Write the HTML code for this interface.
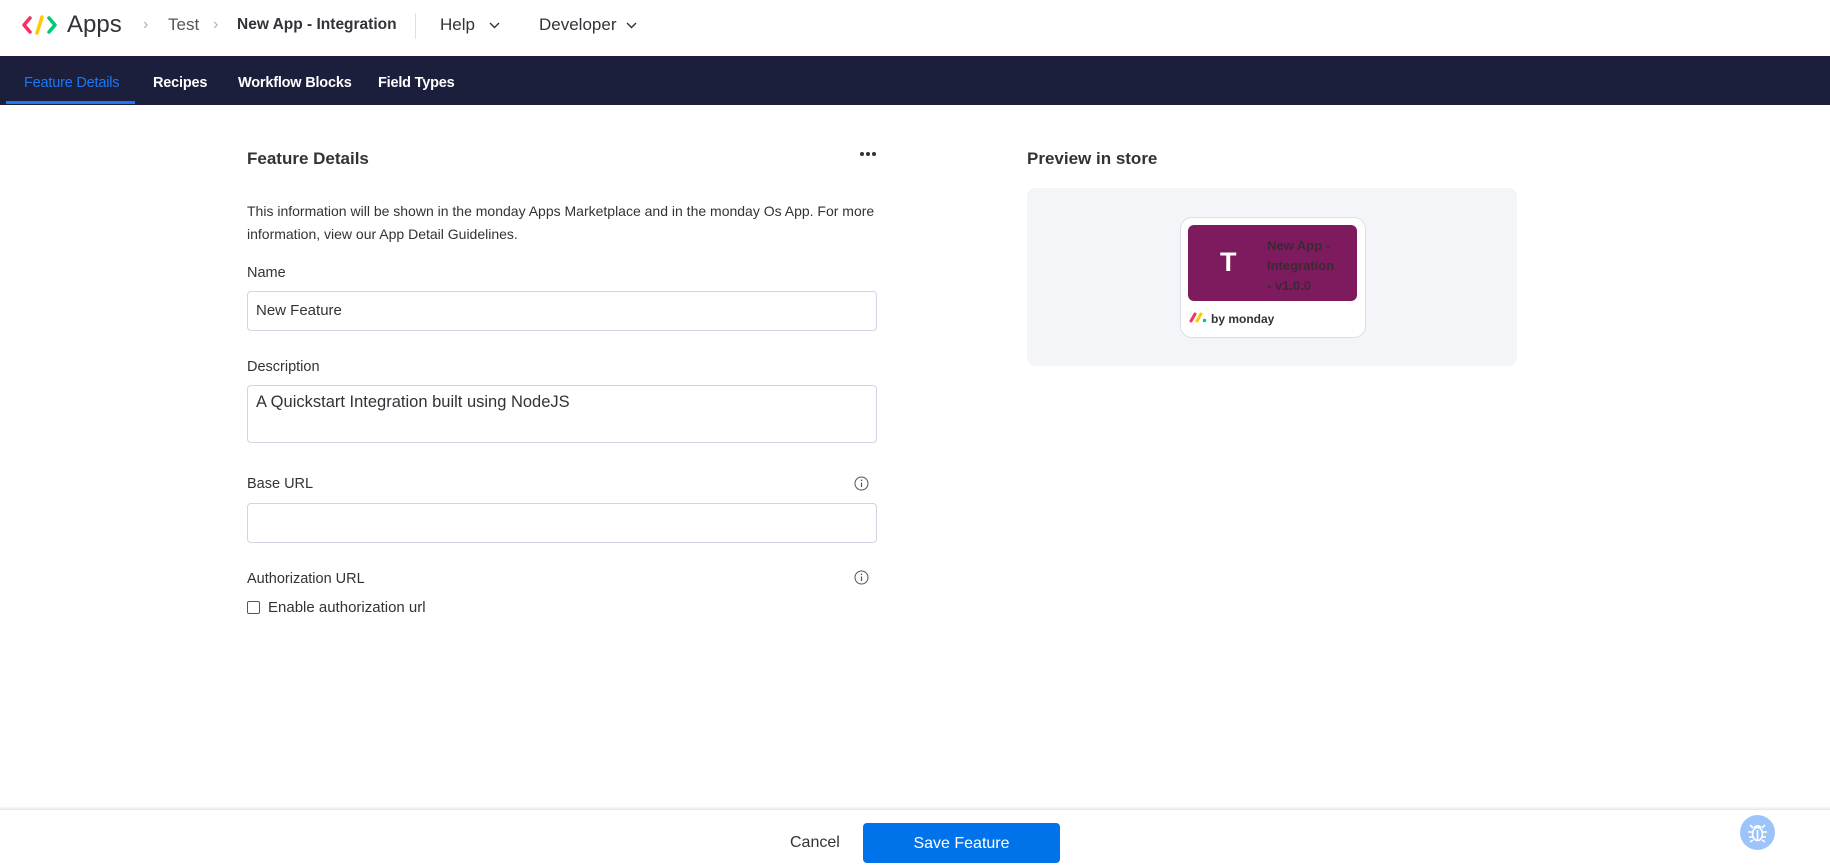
<!DOCTYPE html>
<html><head><meta charset="utf-8"><style>
*{box-sizing:border-box;margin:0;padding:0}
body{width:1830px;height:868px;position:relative;overflow:hidden;background:#fff;font-family:"Liberation Sans",sans-serif;color:#323338}
.a{position:absolute;white-space:nowrap}
.inp{position:absolute;left:247px;width:630px;border:1px solid #d0d4e4;border-radius:4px;background:#fff}
.lbl{position:absolute;left:247px;font-size:14.5px;color:#323338}
.nav{color:#fff;font-size:14.5px;font-weight:bold;top:75px;letter-spacing:-0.2px}
.dot{position:absolute;width:4px;height:4px;border-radius:50%;background:#323338;top:152px}
</style></head><body>
<!-- header -->
<svg class="a" style="left:21px;top:14px" width="38" height="22" viewBox="0 0 38 22">
<polyline points="9,4 3,11 9,18" fill="none" stroke="#f6305f" stroke-width="3.5" stroke-linecap="round" stroke-linejoin="round"/>
<line x1="21" y1="3" x2="16" y2="19" stroke="#ffcb00" stroke-width="3.5" stroke-linecap="round"/>
<polyline points="28,4 34,11 28,18" fill="none" stroke="#00ca72" stroke-width="3.5" stroke-linecap="round" stroke-linejoin="round"/>
</svg>
<div class="a" style="left:67px;top:11px;font-size:24px;color:#323338">Apps</div>
<div class="a" style="left:143px;top:16px;font-size:16px;color:#b0b0b0">›</div>
<div class="a" style="left:168px;top:15px;font-size:17px;color:#555">Test</div>
<div class="a" style="left:213px;top:16px;font-size:16px;color:#b0b0b0">›</div>
<div class="a" style="left:237px;top:16px;font-size:15.5px;font-weight:bold;color:#323338">New App - Integration</div>
<div class="a" style="left:415px;top:13px;width:1px;height:26px;background:#e0e0e0"></div>
<div class="a" style="left:440px;top:15px;font-size:17px;color:#323338">Help</div>
<svg class="a" style="left:489px;top:22px" width="11" height="8"><polyline points="1,1 5.5,5.5 10,1" fill="none" stroke="#323338" stroke-width="1.4"/></svg>
<div class="a" style="left:539px;top:15px;font-size:17px;color:#323338">Developer</div>
<svg class="a" style="left:626px;top:22px" width="11" height="8"><polyline points="1,1 5.5,5.5 10,1" fill="none" stroke="#323338" stroke-width="1.4"/></svg>
<!-- nav -->
<div class="a" style="left:0;top:56px;width:1830px;height:49px;background:#1c1f3b"></div>
<div class="a nav" style="left:24px;color:#1f76f2;font-weight:normal">Feature Details</div>
<div class="a" style="left:6px;top:101px;width:129px;height:3px;background:#1f76f2"></div>
<div class="a nav" style="left:153px">Recipes</div>
<div class="a nav" style="left:238px">Workflow Blocks</div>
<div class="a nav" style="left:378px">Field Types</div>
<!-- left form -->
<div class="a" style="left:247px;top:149px;font-size:17px;font-weight:bold">Feature Details</div>
<div class="dot" style="left:860px"></div><div class="dot" style="left:866px"></div><div class="dot" style="left:872px"></div>
<div class="a" style="left:247px;top:200px;font-size:14px;line-height:23px;white-space:normal;width:640px">This information will be shown in the monday Apps Marketplace and in the monday Os App. For more information, view our App Detail Guidelines.</div>
<div class="lbl" style="top:265px">Name</div>
<div class="inp" style="top:291px;height:40px"></div>
<div class="a" style="left:256px;top:302px;font-size:15px">New Feature</div>
<div class="lbl" style="top:359px">Description</div>
<div class="inp" style="top:385px;height:58px"></div>
<div class="a" style="left:256px;top:393px;font-size:16.5px">A Quickstart Integration built using NodeJS</div>
<div class="lbl" style="top:476px">Base URL</div>
<svg class="a" style="left:854px;top:476px" width="15" height="15"><circle cx="7.5" cy="7.5" r="6.5" fill="none" stroke="#555" stroke-width="1"/><line x1="7.5" y1="6.5" x2="7.5" y2="11" stroke="#555" stroke-width="1.2"/><circle cx="7.5" cy="4.3" r=".8" fill="#555"/></svg>
<div class="inp" style="top:503px;height:40px"></div>
<div class="lbl" style="top:571px">Authorization URL</div>
<svg class="a" style="left:854px;top:570px" width="15" height="15"><circle cx="7.5" cy="7.5" r="6.5" fill="none" stroke="#555" stroke-width="1"/><line x1="7.5" y1="6.5" x2="7.5" y2="11" stroke="#555" stroke-width="1.2"/><circle cx="7.5" cy="4.3" r=".8" fill="#555"/></svg>
<div class="a" style="left:247px;top:601px;width:13px;height:13px;border:1px solid #555;border-radius:2px"></div>
<div class="a" style="left:268px;top:599px;font-size:15px">Enable authorization url</div>
<!-- preview -->
<div class="a" style="left:1027px;top:149px;font-size:17px;font-weight:bold">Preview in store</div>
<div class="a" style="left:1027px;top:188px;width:490px;height:178px;background:#f4f5f8;border-radius:8px"></div>
<div class="a" style="left:1180px;top:217px;width:186px;height:121px;background:#fff;border:1px solid #dcdfe8;border-radius:12px"></div>
<div class="a" style="left:1188px;top:225px;width:169px;height:76px;background:#7e1a5e;border-radius:6px"></div>
<div class="a" style="left:1220px;top:247px;font-size:27px;font-weight:bold;color:#fff">T</div>
<div class="a" style="left:1267px;top:236px;font-size:13px;font-weight:bold;line-height:20px;color:#3a2a35">New App -<br>Integration<br>- v1.0.0</div>
<svg class="a" style="left:1189px;top:312px" width="18" height="11"><line x1="2" y1="9" x2="6" y2="2" stroke="#f6305f" stroke-width="3" stroke-linecap="round"/><line x1="8" y1="9" x2="12" y2="2" stroke="#ffcb00" stroke-width="3" stroke-linecap="round"/><circle cx="15.5" cy="8.5" r="1.7" fill="#00ca72"/></svg>
<div class="a" style="left:1211px;top:312px;font-size:12px;font-weight:bold">by monday</div>
<!-- footer -->
<div class="a" style="left:0;top:806px;width:1830px;height:4px;background:linear-gradient(#fff,#e6e6e6)"></div>
<div class="a" style="left:790px;top:834px;font-size:16px;color:#323338">Cancel</div>
<div class="a" style="left:863px;top:823px;width:197px;height:40px;background:#0073ea;border-radius:4px;color:#fff;font-size:16px;text-align:center;line-height:41px">Save Feature</div>
<div class="a" style="left:1740px;top:815px;width:35px;height:35px;border-radius:50%;background:#9cc4fb"></div>
<svg class="a" style="left:1745px;top:820px" width="25" height="25" viewBox="0 0 25 25" fill="none" stroke="#fff" stroke-width="1.6"><ellipse cx="12.5" cy="14" rx="5" ry="6.5"/><path d="M9 7.5 Q12.5 4 16 7.5 M12.5 10v10 M7.5 12H3 M17.5 12H22 M7.5 17H4 M17.5 17H21 M8 8L5 5 M17 8l3-3 M8 20l-3 2 M17 20l3 2"/></svg>
</body></html>
